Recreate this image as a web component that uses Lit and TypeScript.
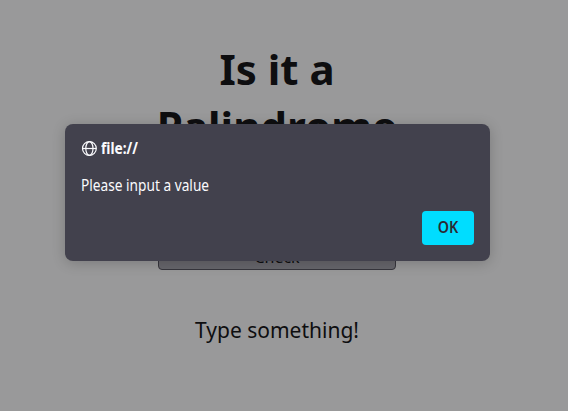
import { LitElement, html, css } from "lit";
import { customElement } from "lit/decorators.js";

@customElement("app-root")
export class AppRoot extends LitElement {
  static styles = css`
    :host {
      display: block;
      position: relative;
      height: 411px;
      overflow: hidden;
      background: #99999a;
      font-family: "Noto Sans", sans-serif;
      color: #0e0e10;
    }
    .page {
      width: 238px;
      margin-left: 158px;
      padding-top: 40px;
      display: flex;
      flex-direction: column;
      align-items: center;
    }
    h1 {
      margin: 0;
      font-size: 42px;
      line-height: 57px;
      font-weight: 700;
      text-align: center;
    }
    .check {
      box-sizing: border-box;
      width: 238px;
      height: 26px;
      margin: 90px 0 0;
      padding: 0;
      border: 1px solid #37363d;
      border-radius: 4px;
      background: #67666c;
      color: #0e0e10;
      font: 16px/22px "Noto Sans", sans-serif;
    }
    .result {
      margin: 46px 0 0;
      font-size: 21px;
      line-height: 29px;
      white-space: nowrap;
    }
    .dialog {
      position: absolute;
      left: 65px;
      top: 124px;
      box-sizing: border-box;
      width: 425px;
      height: 137px;
      padding: 16px;
      border-radius: 8px;
      background: #42414d;
      color: #fbfbfe;
      box-shadow: 0 2px 14px rgba(0, 0, 0, 0.2);
      font-size: 15.4px;
      display: flex;
      flex-direction: column;
    }
    .narrow {
      display: inline-block;
      transform: scaleX(0.89);
      transform-origin: left;
    }
    .origin {
      display: flex;
      align-items: center;
      gap: 4px;
      height: 18px;
      font-weight: 700;
      line-height: 18px;
    }
    .message {
      margin: 18px 0 0;
      line-height: 20px;
    }
    .ok {
      align-self: flex-end;
      width: 52px;
      height: 34px;
      margin-top: auto;
      padding: 0;
      border: 0;
      border-radius: 4px;
      background: #00ddff;
      color: #2b2a33;
      font: 600 15.4px/32px "Noto Sans", sans-serif;
    }
    .ok .narrow {
      transform: scaleX(0.93);
      transform-origin: center;
    }
  `;

  render() {
    return html`
      <main class="page">
        <h1>Is it a Palindrome</h1>
        <button class="check">Check</button>
        <p class="result">Type something!</p>
      </main>
      <section class="dialog" role="alertdialog">
        <div class="origin">
          <svg width="16" height="16" viewBox="0 0 16 16" fill="none" stroke="currentColor" stroke-width="1.2">
            <circle cx="8.4" cy="7.5" r="6.9" />
            <ellipse cx="8.4" cy="7.5" rx="3.6" ry="6.9" />
            <path d="M1.5 7.5h13.8" />
          </svg>
          <span class="narrow">file://</span>
        </div>
        <p class="message"><span class="narrow">Please input a value</span></p>
        <button class="ok"><span class="narrow">OK</span></button>
      </section>
    `;
  }
}
